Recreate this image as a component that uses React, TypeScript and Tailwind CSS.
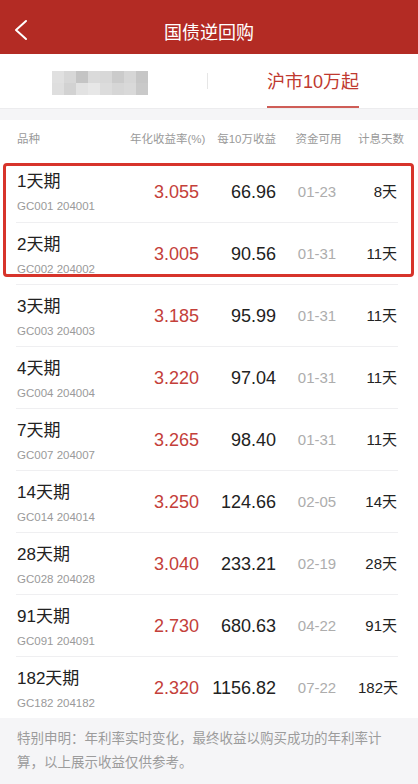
import React from "react";

type Repo = {
  name: string;
  code: string;
  rate: string;
  income: string;
  date: string;
  days: string;
};

const repos: Repo[] = [
  { name: "1天期", code: "GC001 204001", rate: "3.055", income: "66.96", date: "01-23", days: "8天" },
  { name: "2天期", code: "GC002 204002", rate: "3.005", income: "90.56", date: "01-31", days: "11天" },
  { name: "3天期", code: "GC003 204003", rate: "3.185", income: "95.99", date: "01-31", days: "11天" },
  { name: "4天期", code: "GC004 204004", rate: "3.220", income: "97.04", date: "01-31", days: "11天" },
  { name: "7天期", code: "GC007 204007", rate: "3.265", income: "98.40", date: "01-31", days: "11天" },
  { name: "14天期", code: "GC014 204014", rate: "3.250", income: "124.66", date: "02-05", days: "14天" },
  { name: "28天期", code: "GC028 204028", rate: "3.040", income: "233.21", date: "02-19", days: "28天" },
  { name: "91天期", code: "GC091 204091", rate: "2.730", income: "680.63", date: "04-22", days: "91天" },
  { name: "182天期", code: "GC182 204182", rate: "2.320", income: "1156.82", date: "07-22", days: "182天" },
];

// pixelated placeholder for the hidden tab label
const blurCells = [
  "bg-[#e0e0e0]", "bg-[#d7d7d7]", "bg-[#c4c4c4]", "bg-[#dadada]", "bg-[#d8d8d8]", "bg-[#cbcbcb]", "bg-[#d6d6d6]", "bg-[#c6c6c6]",
  "bg-[#dedede]", "bg-[#d2d2d2]", "bg-[#e2e2e2]", "bg-[#e7e7e7]", "bg-[#dcdcdc]", "bg-[#d6d6d6]", "bg-[#d9d9d9]", "bg-[#c9c9c9]",
];

const font = { fontFamily: '"Liberation Sans", "Noto Sans CJK SC", sans-serif' };

const RepoRow = ({ repo, first }: { repo: Repo; first: boolean }) => (
  <div className={`flex h-[62px] items-center ${first ? "" : "border-t border-[#efeff1]"}`}>
    <div className="w-[114px] pl-[1px] pt-[3px]">
      <p className="text-[17px] leading-[22px] text-[#222] whitespace-nowrap">{repo.name}</p>
      <p className="mt-[5px] text-[11.5px] leading-[16px] text-[#9a9a9a] whitespace-nowrap">{repo.code}</p>
    </div>
    <div className="w-[69px] pt-[2px] text-right text-[18px] text-[#c4403a]">{repo.rate}</div>
    <div className="w-[77px] pt-[2px] text-right text-[18px] text-[#222]">{repo.income}</div>
    <div className="w-[82px] pt-[2px] text-center text-[15px] text-[#adadad]">{repo.date}</div>
    <div className="w-[39px] pt-[2px] text-right text-[15px] text-[#222] whitespace-nowrap">{repo.days}</div>
    <div className="w-[1px]" />
  </div>
);

export default function App() {
  return (
    <div className="flex h-[784px] w-[418px] flex-col overflow-hidden bg-white" style={font}>
      {/* title bar */}
      <div className="relative flex h-[54px] items-center justify-center bg-[#b32b24] pt-[12px]">
        <svg className="absolute left-[13px] top-[19px]" width="16" height="22" viewBox="0 0 16 22">
          <polyline points="13,2 3,11 13,20" fill="none" stroke="#fff" strokeWidth="2" strokeLinecap="round" strokeLinejoin="round" />
        </svg>
        <h1 className="text-[18px] text-white">国债逆回购</h1>
      </div>

      {/* tabs */}
      <div className="flex h-[55px] items-stretch border-b border-[#ececee]">
        <div className="flex w-[207px] items-center justify-center pt-[4px]">
          <div className="mr-[7px] grid grid-cols-8 grid-rows-2">
            {blurCells.map((c, i) => (
              <div key={i} className={`h-[12px] w-[12px] ${c}`} />
            ))}
          </div>
        </div>
        <div className="my-[19px] w-px bg-[#e6e6e6]" />
        <div className="flex flex-1 items-center justify-center">
          <div className="flex h-full flex-col justify-end">
            <span className="pb-[10px] text-[18px] text-[#c0392f]">沪市10万起</span>
            <div className="h-[2px] bg-[#cf5d57]" />
          </div>
        </div>
      </div>
      <div className="h-[11px] bg-[#f5f5f7]" />

      {/* table */}
      <div className="ml-[16px] mr-[20px]">
        <div className="flex h-[40px] items-center text-[11.5px] text-[#9a9a9a] whitespace-nowrap">
          <div className="w-[114px] pl-[1px]">品种</div>
          <div className="w-[69px] text-right">年化收益率(%)</div>
          <div className="w-[77px] text-right">每10万收益</div>
          <div className="w-[82px] pl-[3px] text-center">资金可用</div>
          <div className="w-[39px] text-right">计息天数</div>
          <div className="w-[1px]" />
        </div>

        <div className="relative">
          {repos.map((r, i) => (
            <RepoRow key={r.code} repo={r} first={i === 0} />
          ))}
          <div className="pointer-events-none absolute left-[-13px] right-[-16px] top-[3px] h-[114px] rounded-[4px] border-[3px] border-[#d7342b]" />
        </div>
      </div>

      {/* disclaimer */}
      <div className="flex-1 bg-[#f5f5f7] pl-[17px] pr-[30px] pt-[9px]">
        <p className="text-[13.5px] leading-[24px] text-[#9c9c9c]">
          特别申明：年利率实时变化，最终收益以购买成功的年利率计算，以上展示收益仅供参考。
        </p>
      </div>
    </div>
  );
}
